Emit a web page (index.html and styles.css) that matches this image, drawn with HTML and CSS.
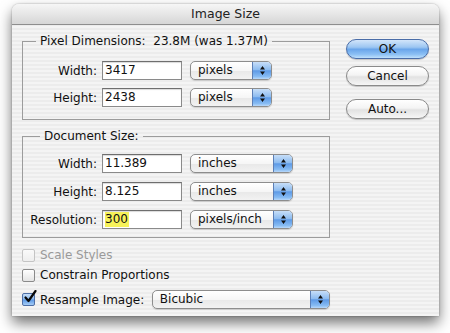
FILE: index.html
```html
<!DOCTYPE html>
<html>
<head>
<meta charset="utf-8">
<link rel="stylesheet" href="styles.css">
</head>
<body>
<div class="window">
  <div class="titlebar">Image Size</div>
  <div class="content">
    <div class="left">
      <fieldset class="group g1">
        <legend>Pixel Dimensions:&nbsp; 23.8M (was 1.37M)</legend>
        <div class="row">
          <span class="label">Width:</span>
          <span class="input">3417</span>
          <span class="popup w82"><span class="ptext">pixels</span><span class="arrows"><svg width="7" height="11" viewBox="0 0 7 11"><path d="M3.5 1L6 4.5H1z M3.5 10L6 6.5H1z" fill="#111"/></svg></span></span>
        </div>
        <div class="row">
          <span class="label">Height:</span>
          <span class="input">2438</span>
          <span class="popup w82"><span class="ptext">pixels</span><span class="arrows"><svg width="7" height="11" viewBox="0 0 7 11"><path d="M3.5 1L6 4.5H1z M3.5 10L6 6.5H1z" fill="#111"/></svg></span></span>
        </div>
      </fieldset>
      <fieldset class="group g2">
        <legend>Document Size:</legend>
        <div class="row">
          <span class="label">Width:</span>
          <span class="input">11.389</span>
          <span class="popup w103"><span class="ptext">inches</span><span class="arrows"><svg width="7" height="11" viewBox="0 0 7 11"><path d="M3.5 1L6 4.5H1z M3.5 10L6 6.5H1z" fill="#111"/></svg></span></span>
        </div>
        <div class="row">
          <span class="label">Height:</span>
          <span class="input">8.125</span>
          <span class="popup w103"><span class="ptext">inches</span><span class="arrows"><svg width="7" height="11" viewBox="0 0 7 11"><path d="M3.5 1L6 4.5H1z M3.5 10L6 6.5H1z" fill="#111"/></svg></span></span>
        </div>
        <div class="row">
          <span class="label">Resolution:</span>
          <span class="input"><span class="sel">300</span></span>
          <span class="popup w103"><span class="ptext">pixels/inch</span><span class="arrows"><svg width="7" height="11" viewBox="0 0 7 11"><path d="M3.5 1L6 4.5H1z M3.5 10L6 6.5H1z" fill="#111"/></svg></span></span>
        </div>
      </fieldset>
      <div class="check disabled c1"><span class="box"></span><span>Scale Styles</span></div>
      <div class="check c2"><span class="box"></span><span>Constrain Proportions</span></div>
      <div class="check c3">
        <span class="box on"><svg width="14" height="14" viewBox="0 0 14 14"><path d="M2.5 7.5L5.5 11L12.5 1" fill="none" stroke="#0a0a0a" stroke-width="2.2" stroke-linecap="round" stroke-linejoin="round"/></svg></span>
        <span class="rlabel">Resample Image:</span>
        <span class="popup w180"><span class="ptext">Bicubic</span><span class="arrows"><svg width="7" height="11" viewBox="0 0 7 11"><path d="M3.5 1L6 4.5H1z M3.5 10L6 6.5H1z" fill="#111"/></svg></span></span>
      </div>
    </div>
    <div class="buttons">
      <div class="btn default">OK</div>
      <div class="btn">Cancel</div>
      <div class="btn auto">Auto...</div>
    </div>
  </div>
</div>
</body>
</html>
```
FILE: styles.css
```css
html, body {
  margin: 0;
  padding: 0;
  background: #ffffff;
}
body {
  width: 450px;
  height: 333px;
  overflow: hidden;
  font-family: "DejaVu Sans", "Liberation Sans", sans-serif;
  font-size: 12px;
  color: #111;
}
.window {
  margin: 4px 0 0 12px;
  width: 427px;
  height: 312px;
  border-radius: 7px 7px 0 0;
  background: repeating-linear-gradient(to bottom, #ececec 0px, #ececec 2px, #f4f4f4 2px, #f4f4f4 4px);
  box-shadow: 0 7px 14px rgba(0,0,0,0.55), 0 0 2px rgba(0,0,0,0.35);
  overflow: hidden;
}
.titlebar {
  height: 20px;
  line-height: 20px;
  text-align: center;
  font-size: 12.5px;
  color: #222;
  background: linear-gradient(to bottom, #f6f6f6 0%, #e6e6e6 50%, #d6d6d6 100%);
  border-bottom: 1px solid #8e8e8e;
}
.content {
  display: flex;
  padding: 9px 10px 0 10px;
}
.left {
  width: 308px;
  display: flex;
  flex-direction: column;
}
.group {
  margin: 0;
  border: 1px solid #9c9c9c;
  padding: 0;
  min-width: 0;
}
.group legend {
  padding: 0 4px;
  line-height: 15px;
  height: 15px;
}
.g1 legend { margin-left: 13px; }
.g2 legend { margin-left: 17px; }
.g1 { padding: 12px 0 12px 0; }
.g2 { padding: 10px 0 8px 0; margin-top: 9px; }
.row {
  display: flex;
  align-items: center;
  height: 19px;
}
.g1 .row + .row { margin-top: 8px; }
.g2 .row + .row { margin-top: 9px; }
.label {
  width: 74px;
  text-align: right;
  margin-right: 5px;
}
.input {
  width: 76px;
  height: 17px;
  line-height: 17px;
  padding-left: 2px;
  padding-right: 0;
  background: #fff;
  border: 1px solid #8a8a8a;
  border-top-color: #6e6e6e;
  box-shadow: inset 0 1px 1px rgba(0,0,0,0.15);
}
.sel {
  background: #f6f259;
  display: inline-block;
  line-height: 15px;
  padding: 0 1px 0 0;
}
.popup {
  margin-left: 8px;
  height: 17px;
  display: flex;
  border: 1px solid #8d8d8d;
  border-radius: 5px;
  overflow: hidden;
  background: linear-gradient(to bottom, #ffffff 0%, #f6f6f6 50%, #e8e8e8 51%, #f2f2f2 100%);
  box-shadow: 0 1px 1px rgba(0,0,0,0.15);
}
.w82 { width: 80px; }
.w103 { width: 101px; }
.w180 { width: 178px; margin-left: 0; }
.ptext {
  flex: 1;
  padding-left: 7px;
  line-height: 17px;
}
.arrows {
  width: 18px;
  display: flex;
  align-items: center;
  justify-content: center;
  border-left: 1px solid #5c7fb6;
  background: linear-gradient(to bottom, #c7def8 0%, #8dbcf0 45%, #5e9ae6 52%, #86bbf3 85%, #b8d8fa 100%);
}
.check {
  display: flex;
  align-items: center;
  height: 14px;
}
.box {
  width: 11px;
  height: 11px;
  border: 1px solid #8a8a8a;
  border-radius: 2px;
  background: linear-gradient(to bottom, #ffffff, #e4e4e4);
  margin-right: 5px;
  position: relative;
  flex: none;
}
.c1 { margin-top: 10px; }
.c2 { margin-top: 6px; }
.c3 { margin-top: 8px; height: 19px; }
.disabled { color: #9a9a9a; }
.disabled .box { border-color: #c4c4c4; background: linear-gradient(to bottom, #fafafa, #eeeeee); }
.box.on {
  border-color: #4e6fa6;
  background: linear-gradient(to bottom, #c7def8 0%, #8dbcf0 45%, #5e9ae6 55%, #a6cdf6 100%);
}
.box.on svg {
  position: absolute;
  left: 0;
  top: -4px;
}
.rlabel { width: 113px; }
.buttons {
  margin-left: 16px;
  margin-top: 5px;
  display: flex;
  flex-direction: column;
  width: 85px;
}
.btn {
  height: 18px;
  line-height: 18px;
  text-align: center;
  border: 1px solid #8a8a8a;
  border-radius: 10px;
  background: linear-gradient(to bottom, #ffffff 0%, #f4f4f4 45%, #e2e2e2 55%, #f6f6f6 100%);
  box-shadow: 0 1px 1px rgba(0,0,0,0.2);
}
.btn + .btn { margin-top: 7px; }
.btn.auto { margin-top: 13px; }
.btn.default {
  border-color: #4a6da8;
  background: linear-gradient(to bottom, #d2e5fa 0%, #9cc6f2 40%, #6aa5ea 52%, #8cc0f4 80%, #bfe0fc 100%);
}
```
